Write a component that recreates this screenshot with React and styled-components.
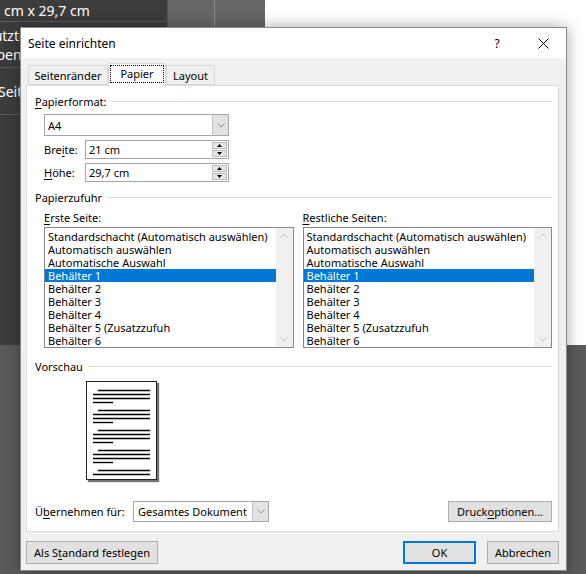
import React from 'react';
import styled, { createGlobalStyle } from 'styled-components';

const GlobalStyle = createGlobalStyle`
  html, body {
    margin: 0;
    padding: 0;
  }
  body {
    width: 586px;
    height: 574px;
    overflow: hidden;
    background: #5a5a5a;
    font-family: "Noto Sans", "DejaVu Sans", sans-serif;
  }
`;

const Desktop = styled.div`
  position: relative;
  width: 586px;
  height: 574px;
  display: grid;
  grid-template-columns: 167px 98px 1fr;
  grid-template-rows: 345px 1fr;
  background: #5a5a5a;
  overflow: hidden;
`;

const SidePanel = styled.div`
  background: #3c3c3c;
  display: flex;
  flex-direction: column;
  color: #fff;
  font-size: 14px;
  overflow: hidden;
`;

const SideRow = styled.div`
  height: ${p => p.$h}px;
  border-bottom: 1px solid #5c5c5c;
  display: flex;
  flex-direction: column;
  justify-content: center;
  padding-left: 4px;
  white-space: nowrap;
`;

const SideText = styled.div`
  margin-left: ${p => p.$shift || 0}px;
  line-height: 19px;
`;

const GreyColumn = styled.div`
  background: #666;
  border-left: 1px solid #555;
  display: grid;
  grid-template-columns: 46px 1px 1fr;
`;

const GreyLine = styled.div`
  grid-column: 2;
  background: #8c8c8c;
`;

const WhiteArea = styled.div`
  background: #fff;
`;

const Dialog = styled.div`
  position: absolute;
  left: 20px;
  top: 27px;
  width: 547px;
  height: 544px;
  box-sizing: border-box;
  border: 1px solid #8a8a8a;
  background: #f0f0f0;
  box-shadow: 0 0 14px rgba(0, 0, 0, 0.35);
  display: flex;
  flex-direction: column;
  font-size: 11px;
  color: #000;
`;

const TitleBar = styled.div`
  height: 30px;
  background: #fff;
  display: flex;
  align-items: center;
  padding-left: 7px;
`;

const Title = styled.div`
  flex: 1;
  font-size: 12px;
`;

const CaptionButton = styled.div`
  width: 46px;
  height: 30px;
  display: flex;
  align-items: center;
  justify-content: center;
  font-size: 12px;
`;

const Body = styled.div`
  flex: 1;
  display: flex;
  flex-direction: column;
  padding: 5px 7px 7px 5px;
`;

const TabRow = styled.div`
  height: 22px;
  display: flex;
  align-items: flex-end;
  padding-left: 2px;
`;

const Tab = styled.div`
  box-sizing: border-box;
  width: ${p => p.$w}px;
  height: ${p => (p.$active ? 23 : 20)}px;
  margin-bottom: ${p => (p.$active ? -1 : 0)}px;
  border: 1px solid #d9d9d9;
  border-bottom: ${p => (p.$active ? 'none' : '1px solid #d9d9d9')};
  background: ${p => (p.$active ? '#fff' : '#f0f0f0')};
  display: flex;
  align-items: center;
  justify-content: center;
  position: relative;
  z-index: ${p => (p.$active ? 1 : 0)};
`;

const FocusText = styled.span`
  outline: 1px dotted #000;
  padding: 0 9px;
  line-height: 16px;
  margin-top: -2px;
`;

const Panel = styled.div`
  height: 447px;
  box-sizing: border-box;
  background: #fff;
  border: 1px solid #d9d9d9;
  padding: 7px 6px 0 8px;
  display: flex;
  flex-direction: column;
`;

const GroupHeader = styled.div`
  height: 16px;
  margin-top: ${p => p.$mt || 0}px;
  display: flex;
  align-items: center;
  gap: 5px;

  &::after {
    content: '';
    flex: 1;
    border-top: 1px solid #dcdcdc;
  }
`;

const U = styled.span`
  text-decoration: underline;
  text-underline-offset: 2px;
`;

const Indent = styled.div`
  margin-left: 9px;
  display: flex;
  flex-direction: column;
`;

const Combo = styled.div`
  box-sizing: border-box;
  width: ${p => p.$w}px;
  height: ${p => p.$h}px;
  margin-top: ${p => p.$mt || 0}px;
  border: 1px solid #a6a6a6;
  background: #fff;
  display: flex;
  align-items: stretch;
`;

const ComboText = styled.div`
  flex: 1;
  display: flex;
  align-items: center;
  padding-left: ${p => p.$pl || 3}px;
`;

const ComboArrow = styled.div`
  width: 15px;
  background: #e3e3e3;
  border-left: 1px solid #c4c4c4;
  display: flex;
  align-items: center;
  justify-content: center;
`;

const FieldRow = styled.div`
  height: 19px;
  margin-top: 4px;
  display: flex;
  align-items: center;
`;

const FieldLabel = styled.div`
  width: 41px;
`;

const SpinBox = styled.div`
  box-sizing: border-box;
  width: 144px;
  height: 19px;
  border: 1px solid #a6a6a6;
  display: flex;
`;

const SpinText = styled.div`
  flex: 1;
  display: flex;
  align-items: center;
  padding-left: 3px;
`;

const Spinner = styled.div`
  width: 15px;
  display: flex;
  flex-direction: column;
  gap: 1px;
  padding: 1px 1px 1px 0;
`;

const SpinHalf = styled.div`
  flex: 1;
  background: #e6e6e6;
  border: 1px solid #bcbcbc;
  display: flex;
  align-items: center;
  justify-content: center;
`;

const Columns = styled.div`
  margin-top: 4px;
  margin-left: 9px;
  display: flex;
  gap: 9px;
`;

const Column = styled.div`
  width: 250px;
  display: flex;
  flex-direction: column;
`;

const ColLabel = styled.div`
  height: 16px;
  display: flex;
  align-items: center;
`;

const ListBox = styled.div`
  box-sizing: border-box;
  height: 121px;
  margin-top: 2px;
  border: 1px solid #828790;
  display: flex;
  overflow: hidden;
`;

const ListItems = styled.div`
  flex: 1;
  padding-top: 2px;
  overflow: hidden;
`;

const ListItem = styled.div`
  height: 13px;
  line-height: 13px;
  padding-left: 3px;
  white-space: nowrap;
  background: ${p => (p.$selected ? '#0078d7' : 'transparent')};
  color: ${p => (p.$selected ? '#fff' : '#000')};
`;

const ScrollBar = styled.div`
  width: 17px;
  background: #f0f0f0;
  display: flex;
  flex-direction: column;
  justify-content: space-between;
  align-items: center;
  padding: 5px 0;
`;

const Page = styled.div`
  width: 71px;
  height: 99px;
  box-sizing: border-box;
  margin: 7px 0 0 51px;
  border: 1px solid #222;
  background: #fff;
  box-shadow: 2px 2px 1px rgba(0, 0, 0, 0.55);
`;

const BottomRow = styled.div`
  margin-top: 21px;
  height: 21px;
  display: flex;
  align-items: center;
`;

const ApplyLabel = styled.div`
  width: 98px;
`;

const Spacer = styled.div`
  flex: 1;
`;

const Button = styled.div`
  box-sizing: border-box;
  width: ${p => p.$w}px;
  height: ${p => p.$h || 23}px;
  margin-left: ${p => p.$ml || 0}px;
  background: #e1e1e1;
  border: ${p => (p.$default ? '2px solid #0078d7' : '1px solid #adadad')};
  display: flex;
  align-items: center;
  justify-content: center;
  white-space: nowrap;
`;

const ButtonRow = styled.div`
  margin-top: 9px;
  height: 23px;
  display: flex;
  align-items: center;
`;

const Chevron = ({ up }) => (
  <svg width="8" height="5" viewBox="0 0 8 5">
    <path
      d={up ? 'M0.5 4.5 L4 1 L7.5 4.5' : 'M0.5 0.5 L4 4 L7.5 0.5'}
      fill="none"
      stroke="#c2c2c2"
      strokeWidth="1"
    />
  </svg>
);

const DropChevron = () => (
  <svg width="8" height="5" viewBox="0 0 8 5">
    <path d="M0.5 0.5 L4 4 L7.5 0.5" fill="none" stroke="#8a8a8a" strokeWidth="1" />
  </svg>
);

const Triangle = ({ up }) => (
  <svg width="5" height="3" viewBox="0 0 5 3">
    <path d={up ? 'M0 3 L2.5 0 L5 3 Z' : 'M0 0 L2.5 3 L5 0 Z'} fill="#000" />
  </svg>
);

const CloseIcon = () => (
  <svg width="11" height="11" viewBox="0 0 11 11">
    <path d="M0.5 0.5 L10.5 10.5 M10.5 0.5 L0.5 10.5" stroke="#000" strokeWidth="1" />
  </svg>
);

const trays = [
  'Standardschacht (Automatisch auswählen)',
  'Automatisch auswählen',
  'Automatische Auswahl',
  'Behälter 1',
  'Behälter 2',
  'Behälter 3',
  'Behälter 4',
  'Behälter 5 (Zusatzzufuh',
  'Behälter 6',
];

const TrayList = () => (
  <ListBox>
    <ListItems>
      {trays.map((t, i) => (
        <ListItem key={t} $selected={i === 3}>
          {t}
        </ListItem>
      ))}
    </ListItems>
    <ScrollBar>
      <Chevron up />
      <Chevron />
    </ScrollBar>
  </ListBox>
);

// text lines on the little page preview
const PreviewLines = () => {
  const lines = [];
  for (let g = 0; g < 5; g++) {
    const y = 8.5 + g * 20;
    lines.push([11, 63, y]);
    if (g < 4) {
      lines.push([6, 63, y + 4]);
      lines.push([6, 63, y + 8]);
      lines.push([6, 26, y + 12]);
    } else {
      lines.push([6, 63, y + 4]);
    }
  }
  return (
    <svg width="69" height="97" viewBox="0 0 69 97">
      {lines.map(([x1, x2, y], i) => (
        <line key={i} x1={x1} x2={x2} y1={y} y2={y} stroke="#000" strokeWidth="1.4" />
      ))}
    </svg>
  );
};

function App() {
  return (
    <Desktop>
      <GlobalStyle />
      <SidePanel>
        <SideRow $h={21}>
          <SideText>cm x 29,7 cm</SideText>
        </SideRow>
        <SideRow $h={45}>
          <SideText $shift={-36}>Benutzte</SideText>
          <SideText $shift={-16}>oben:</SideText>
        </SideRow>
        <SideRow $h={46}>
          <SideText $shift={-6}>Seite</SideText>
        </SideRow>
      </SidePanel>
      <GreyColumn>
        <GreyLine />
      </GreyColumn>
      <WhiteArea />

      <Dialog>
        <TitleBar>
          <Title>Seite einrichten</Title>
          <CaptionButton>?</CaptionButton>
          <CaptionButton>
            <CloseIcon />
          </CaptionButton>
        </TitleBar>
        <Body>
          <TabRow>
            <Tab $w={80}>Seitenränder</Tab>
            <Tab $w={58} $active>
              <FocusText>Papier</FocusText>
            </Tab>
            <Tab $w={49}>Layout</Tab>
          </TabRow>
          <Panel>
            <GroupHeader>
              <span>
                <U>P</U>apierformat:
              </span>
            </GroupHeader>
            <Indent>
              <Combo $w={185} $h={22} $mt={5}>
                <ComboText>A4</ComboText>
                <ComboArrow>
                  <DropChevron />
                </ComboArrow>
              </Combo>
              <FieldRow>
                <FieldLabel>
                  Bre<U>i</U>te:
                </FieldLabel>
                <SpinBox>
                  <SpinText>21 cm</SpinText>
                  <Spinner>
                    <SpinHalf>
                      <Triangle up />
                    </SpinHalf>
                    <SpinHalf>
                      <Triangle />
                    </SpinHalf>
                  </Spinner>
                </SpinBox>
              </FieldRow>
              <FieldRow>
                <FieldLabel>
                  <U>H</U>öhe:
                </FieldLabel>
                <SpinBox>
                  <SpinText>29,7 cm</SpinText>
                  <Spinner>
                    <SpinHalf>
                      <Triangle up />
                    </SpinHalf>
                    <SpinHalf>
                      <Triangle />
                    </SpinHalf>
                  </Spinner>
                </SpinBox>
              </FieldRow>
            </Indent>

            <GroupHeader $mt={7}>
              <span>Papierzufuhr</span>
            </GroupHeader>
            <Columns>
              <Column>
                <ColLabel>
                  <span>
                    <U>E</U>rste Seite:
                  </span>
                </ColLabel>
                <TrayList />
              </Column>
              <Column>
                <ColLabel>
                  <span>
                    <U>R</U>estliche Seiten:
                  </span>
                </ColLabel>
                <TrayList />
              </Column>
            </Columns>

            <GroupHeader $mt={10}>
              <span>Vorschau</span>
            </GroupHeader>
            <Page>
              <PreviewLines />
            </Page>

            <BottomRow>
              <ApplyLabel>
                Ü<U>b</U>ernehmen für:
              </ApplyLabel>
              <Combo $w={136} $h={21}>
                <ComboText $pl={4}>Gesamtes Dokument</ComboText>
                <ComboArrow>
                  <DropChevron />
                </ComboArrow>
              </Combo>
              <Spacer />
              <Button $w={104} $h={21}>
                <span>
                  Druck<U>o</U>ptionen...
                </span>
              </Button>
            </BottomRow>
          </Panel>
          <ButtonRow>
            <Button $w={132}>
              <span>
                Als S<U>t</U>andard festlegen
              </span>
            </Button>
            <Spacer />
            <Button $w={73} $default>
              OK
            </Button>
            <Button $w={72} $ml={11}>
              Abbrechen
            </Button>
          </ButtonRow>
        </Body>
      </Dialog>
    </Desktop>
  );
}

export default App;
